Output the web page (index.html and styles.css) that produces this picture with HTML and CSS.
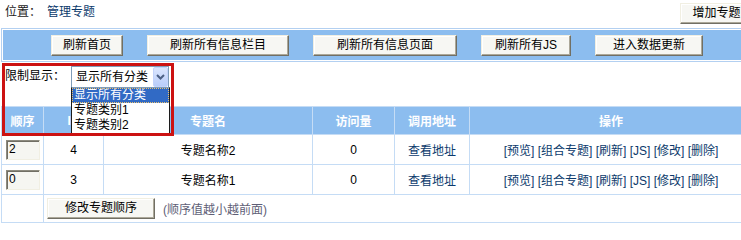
FILE: index.html
```html
<!DOCTYPE html>
<html>
<head>
<meta charset="utf-8">
<title>管理专题</title>
<link rel="stylesheet" href="styles.css">
</head>
<body>
<div class="page">
  <div class="topbar">
    <div class="loc">位置：<a class="link loc-link" href="#">管理专题</a></div>
    <button class="btn btn-add" type="button">增加专题</button>
  </div>

  <table class="bar">
    <tr>
      <td>
        <div class="bar-btns">
          <button class="btn w-home" type="button">刷新首页</button>
          <button class="btn w-col" type="button">刷新所有信息栏目</button>
          <button class="btn w-page" type="button">刷新所有信息页面</button>
          <button class="btn w-js" type="button">刷新所有JS</button>
          <button class="btn w-data" type="button">进入数据更新</button>
        </div>
      </td>
    </tr>
  </table>

  <div class="filter">
    <span class="filter-label">限制显示：</span>
    <span class="select">
      <span class="select-text">显示所有分类</span>
      <span class="select-arrow">
        <svg width="9" height="6" viewBox="0 0 9 6"><path d="M1 1 L4.5 4.5 L8 1" fill="none" stroke="#4d6185" stroke-width="2"/></svg>
      </span>
    </span>
  </div>

  <table class="list">
    <colgroup>
      <col class="c1"><col class="c2"><col class="c3"><col class="c4"><col class="c5"><col class="c6">
    </colgroup>
    <tr class="head">
      <th>顺序</th><th>ID</th><th>专题名</th><th>访问量</th><th>调用地址</th><th>操作</th>
    </tr>
    <tr class="row">
      <td class="cell-order"><span class="order-input">2</span></td>
      <td>4</td>
      <td>专题名称2</td>
      <td>0</td>
      <td><a class="link" href="#">查看地址</a></td>
      <td class="ops"><a class="link" href="#">[预览]</a> <a class="link" href="#">[组合专题]</a> <a class="link" href="#">[刷新]</a> <a class="link" href="#">[JS]</a> <a class="link" href="#">[修改]</a> <a class="link" href="#">[删除]</a></td>
    </tr>
    <tr class="row">
      <td class="cell-order"><span class="order-input">0</span></td>
      <td>3</td>
      <td>专题名称1</td>
      <td>0</td>
      <td><a class="link" href="#">查看地址</a></td>
      <td class="ops"><a class="link" href="#">[预览]</a> <a class="link" href="#">[组合专题]</a> <a class="link" href="#">[刷新]</a> <a class="link" href="#">[JS]</a> <a class="link" href="#">[修改]</a> <a class="link" href="#">[删除]</a></td>
    </tr>
    <tr class="row-foot">
      <td></td>
      <td colspan="5" class="foot-cell">
        <div class="foot">
          <button class="btn w-order" type="button">修改专题顺序</button>
          <span class="note">(顺序值越小越前面)</span>
        </div>
      </td>
    </tr>
  </table>

  <div class="droplist">
    <div class="opt opt-sel"><span class="opt-text">显示所有分类</span></div>
    <div class="opt"><span class="opt-text">专题类别1</span></div>
    <div class="opt"><span class="opt-text">专题类别2</span></div>
  </div>

  <div class="mark"></div>
</div>
</body>
</html>
```

FILE: styles.css
```css
html, body {
  margin: 0;
  padding: 0;
  overflow: hidden;
  background: #ffffff;
}

body {
  font-family: "Liberation Sans", "Noto Sans CJK SC", sans-serif;
  font-size: 12px;
  color: #000000;
}

.page {
  position: relative;
  width: 752px;
  margin-left: 1px;
}

.link {
  color: #0b3a6c;
  text-decoration: none;
}

/* top bar */
.topbar {
  height: 28px;
  display: flex;
  justify-content: space-between;
  align-items: flex-start;
}

.loc {
  padding-left: 4px;
  line-height: 24px;
  color: #1a1a1a;
}

.loc-link {
  margin-left: 6px;
}

.btn {
  box-sizing: border-box;
  height: 21px;
  padding: 0;
  font-family: "Liberation Sans", "Noto Sans CJK SC", sans-serif;
  font-size: 12px;
  line-height: 17px;
  color: #000000;
  background: #f7f7f3;
  border: 1px solid;
  border-color: #f1efe2 #716f64 #716f64 #f1efe2;
  box-shadow: inset -1px -1px 0 #aca899, inset 1px 1px 0 #ffffff;
  border-radius: 0;
}

.btn-add {
  width: 73px;
  margin-top: 3px;
  margin-right: 0;
}

.w-home { width: 72px; }
.w-col { width: 142px; }
.w-page { width: 144px; }
.w-js { width: 90px; }
.w-data { width: 108px; }
.w-order { width: 108px; }

/* blue button bar */
.bar {
  width: 752px;
  border: 1px solid #b3d0f1;
  border-spacing: 1px;
  background: #ffffff;
  box-sizing: border-box;
}

.bar td {
  height: 30px;
  padding: 0;
  background: #8cbdef;
  vertical-align: middle;
}

.bar-btns {
  display: flex;
  justify-content: center;
  gap: 24px;
}

/* filter */
.filter {
  height: 44px;
  box-sizing: border-box;
  padding: 4px 0 0 4px;
  display: flex;
  align-items: flex-start;
}

.filter-label {
  line-height: 21px;
}

.select {
  position: relative;
  box-sizing: border-box;
  width: 98px;
  height: 22px;
  margin-left: 6px;
  border: 1px solid #7f9db9;
  background: #ffffff;
  display: flex;
  align-items: center;
}

.select-text {
  padding-left: 4px;
  line-height: 18px;
}

.select-arrow {
  position: absolute;
  right: 0;
  top: 0;
  box-sizing: border-box;
  width: 15px;
  height: 20px;
  border: 1px solid #c3d3fb;
  border-radius: 2px;
  background: linear-gradient(#dbe6fe, #b9cdf9);
  display: flex;
  align-items: center;
  justify-content: center;
}

.select-arrow svg {
  display: block;
}

/* list table */
.list {
  width: 752px;
  table-layout: fixed;
  border-spacing: 1px;
  background: #c5dcf5;
}

.list col.c1 { width: 41px; }
.list col.c2 { width: 59px; }
.list col.c3 { width: 208px; }
.list col.c4 { width: 81px; }
.list col.c5 { width: 74px; }
.list col.c6 { width: 282px; }

.list th,
.list td {
  padding: 0;
  text-align: center;
  vertical-align: middle;
  white-space: nowrap;
}

.head th {
  height: 27px;
  background: #8cbdef;
  color: #ffffff;
  font-weight: bold;
}

.row td {
  height: 29px;
  background: #ffffff;
}

.row-foot td {
  height: 27px;
  background: #ffffff;
}

.list td.cell-order {
  text-align: left;
  padding-left: 4px;
}

.order-input {
  display: block;
  box-sizing: border-box;
  width: 34px;
  height: 20px;
  padding-left: 2px;
  line-height: 16px;
  text-align: left;
  background: #f6f6f1;
  border: 1px solid;
  border-color: #8d8b7f #f1efe2 #f1efe2 #8d8b7f;
  box-shadow: inset 1px 1px 0 #716f64;
}

.list td.foot-cell {
  text-align: left;
  padding-left: 3px;
}

.foot {
  display: flex;
  align-items: center;
  gap: 8px;
}

.note {
  color: #5e5e76;
}

/* open dropdown list (overlay) */
.droplist {
  position: absolute;
  left: 70px;
  top: 87px;
  box-sizing: border-box;
  width: 99px;
  height: 47px;
  border: 1px solid #1c1c1c;
  border-top-color: #7f9db9;
  background: #ffffff;
}

.opt {
  height: 15px;
  padding-left: 2px;
  white-space: nowrap;
  overflow: hidden;
}

.opt-text {
  display: inline-block;
  height: 15px;
  font-size: 12px;
  line-height: 15px;
  overflow: hidden;
  vertical-align: top;
}

.opt-sel {
  background: #316ac5;
  color: #ffffff;
  outline: 1px dotted #e8c070;
  outline-offset: -1px;
}

/* red annotation frame (overlay) */
.mark {
  position: absolute;
  left: 1px;
  top: 63px;
  box-sizing: border-box;
  width: 172px;
  height: 73px;
  border: 3px solid #cc1212;
  pointer-events: none;
}
```
